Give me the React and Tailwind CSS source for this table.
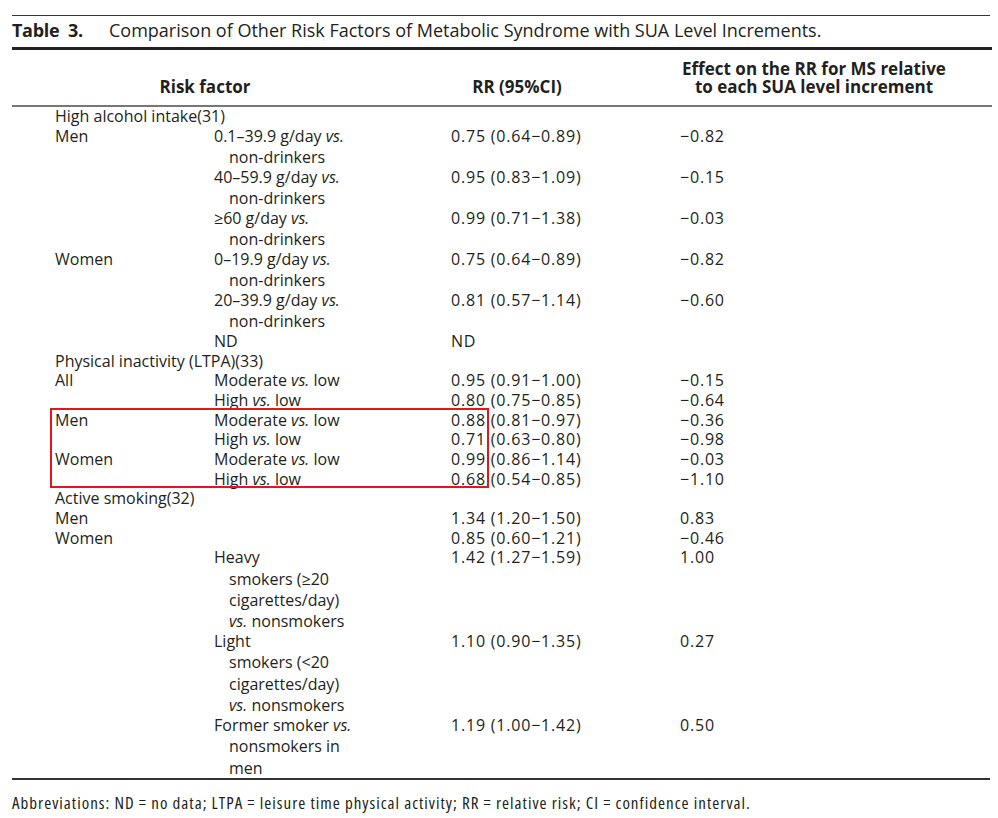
const FONT = { fontFamily: '"Open Sans", "Noto Sans", sans-serif' };

function Vs() {
  return <i>vs.</i>;
}

const MINUS = '\u2212';

// each row: c1 (group), lines (col2 lines), rr, eff
const ALCOHOL = [
  { c1: 'Men', lines: [<>0.1–39.9 g/day <Vs /></>, 'non-drinkers'], rr: '0.75 (0.64−0.89)', eff: `${MINUS}0.82` },
  { c1: '', lines: [<>40–59.9 g/day <Vs /></>, 'non-drinkers'], rr: '0.95 (0.83−1.09)', eff: `${MINUS}0.15` },
  { c1: '', lines: [<>≥60 g/day <Vs /></>, 'non-drinkers'], rr: '0.99 (0.71−1.38)', eff: `${MINUS}0.03` },
  { c1: 'Women', lines: [<>0–19.9 g/day <Vs /></>, 'non-drinkers'], rr: '0.75 (0.64−0.89)', eff: `${MINUS}0.82` },
  { c1: '', lines: [<>20–39.9 g/day <Vs /></>, 'non-drinkers'], rr: '0.81 (0.57−1.14)', eff: `${MINUS}0.60` },
  { c1: '', lines: ['ND'], rr: 'ND', eff: '' },
];

const ACTIVITY_ALL = [
  { c1: 'All', lines: [<>Moderate <Vs /> low</>], rr: '0.95 (0.91−1.00)', eff: `${MINUS}0.15` },
  { c1: '', lines: [<>High <Vs /> low</>], rr: '0.80 (0.75−0.85)', eff: `${MINUS}0.64` },
];

const ACTIVITY_SEX = [
  { c1: 'Men', lines: [<>Moderate <Vs /> low</>], rr: '0.88 (0.81−0.97)', eff: `${MINUS}0.36` },
  { c1: '', lines: [<>High <Vs /> low</>], rr: '0.71 (0.63−0.80)', eff: `${MINUS}0.98` },
  { c1: 'Women', lines: [<>Moderate <Vs /> low</>], rr: '0.99 (0.86−1.14)', eff: `${MINUS}0.03` },
  { c1: '', lines: [<>High <Vs /> low</>], rr: '0.68 (0.54−0.85)', eff: `${MINUS}1.10` },
];

const SMOKING = [
  { c1: 'Men', lines: [''], rr: '1.34 (1.20−1.50)', eff: '0.83' },
  { c1: 'Women', lines: [''], rr: '0.85 (0.60−1.21)', eff: `${MINUS}0.46` },
  { c1: '', lines: ['Heavy', 'smokers (≥20', 'cigarettes/day)', <><Vs /> nonsmokers</>], rr: '1.42 (1.27−1.59)', eff: '1.00' },
  { c1: '', lines: ['Light', 'smokers (<20', 'cigarettes/day)', <><Vs /> nonsmokers</>], rr: '1.10 (0.90−1.35)', eff: '0.27' },
  { c1: '', lines: [<>Former smoker <Vs /></>, 'nonsmokers in', 'men'], rr: '1.19 (1.00−1.42)', eff: '0.50' },
];

function Row({ row }) {
  return (
    <div className="grid grid-cols-[202px_237px_229px_1fr]">
      <div className="pl-[43px]">{row.c1}</div>
      <div>
        {row.lines.map((l, i) => (
          <div key={i} className={i > 0 ? 'pl-[15px] pt-[1.75px] whitespace-nowrap' : 'whitespace-nowrap'}>
            {l === '' ? '\u00a0' : l}
          </div>
        ))}
      </div>
      <div className="whitespace-nowrap tracking-[0.8px]">{row.rr}</div>
      <div className="whitespace-nowrap tracking-[0.8px]">{row.eff}</div>
    </div>
  );
}

function Section({ title }) {
  return <div className="pl-[43px]">{title}</div>;
}

export default function App() {
  return (
    <div className="w-[998px] h-[818px] bg-white text-[#231f20] px-[12px] pt-[15px]" style={FONT}>
      <div className="w-[978px] border-t border-[#333]" />
      <div className="flex items-center h-[31px] pb-[3px] text-[18px] leading-none">
        <span className="font-bold w-[97px] tracking-[-0.3px]">Table&nbsp;&nbsp;3.</span>
        <span>Comparison of Other Risk Factors of Metabolic Syndrome with SUA Level Increments.</span>
      </div>
      <div className="w-[980px] border-t-[3px] border-[#222]" />

      <div className="w-[980px] h-[55px] flex items-end pb-[9px] text-[17px] leading-[18px] font-bold">
        <div className="w-[386px] text-center">Risk factor</div>
        <div className="w-[238px] text-center">RR (95%CI)</div>
        <div className="w-[356px] text-center">
          Effect on the RR for MS relative
          <br />
          to each SUA level increment
        </div>
      </div>
      <div className="w-[980px] border-t-2 border-[#777]" />

      <div className="w-[980px] text-[16px] leading-[19.65px]">
        <Section title="High alcohol intake(31)" />
        {ALCOHOL.map((r, i) => (
          <Row key={i} row={r} />
        ))}
        <Section title="Physical inactivity (LTPA)(33)" />
        {ACTIVITY_ALL.map((r, i) => (
          <Row key={i} row={r} />
        ))}
        <div className="relative">
          {ACTIVITY_SEX.map((r, i) => (
            <Row key={i} row={r} />
          ))}
          <div className="absolute left-[38px] top-[-3px] w-[439px] h-[80px] border-2 border-[#e8141c] pointer-events-none" />
        </div>
        <Section title="Active smoking(32)" />
        {SMOKING.map((r, i) => (
          <Row key={i} row={r} />
        ))}
      </div>
      <div className="w-[978px] border-t-2 border-[#333]" />

      <div className="pt-[14px] text-[17px] leading-none tracking-[1px]" style={{ fontStretch: 'condensed' }}>
        Abbreviations: ND = no data; LTPA = leisure time physical activity; RR = relative risk; CI = confidence interval.
      </div>
    </div>
  );
}
